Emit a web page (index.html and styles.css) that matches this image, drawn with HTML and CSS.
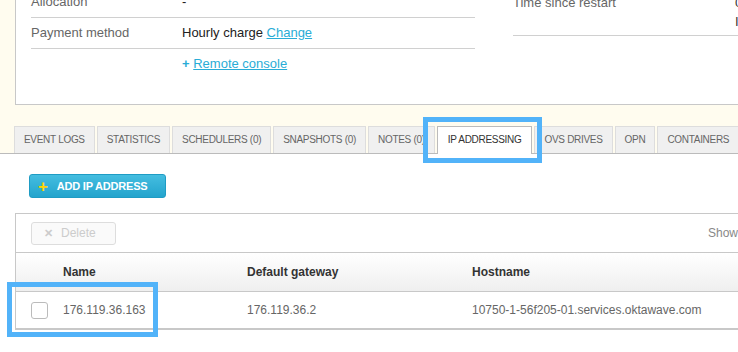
FILE: index.html
```html
<!DOCTYPE html>
<html lang="en">
<head>
    <meta charset="UTF-8">
    <title>IP addressing</title>
    <link rel="stylesheet" href="styles.css">
</head>
<body>
    <div class="page">
        <!-- Server details -->
        <section class="details">
            <div class="details-col left">
                <div class="row"><span class="label">Allocation</span><span class="value">-</span></div>
                <div class="row"><span class="label">Payment method</span><span class="value">Hourly charge <a href="#">Change</a></span></div>
                <div class="row plain"><span class="label"></span><span class="value"><span class="plus">+</span> <a href="#">Remote console</a></span></div>
            </div>
            <div class="details-col right">
                <div class="row tall"><span class="label">Time since restart</span><span class="value">0<br>I</span></div>
            </div>
        </section>

        <!-- Tabs -->
        <nav class="tabs">
            <a class="tab" href="#">EVENT LOGS</a>
            <a class="tab" href="#">STATISTICS</a>
            <a class="tab" href="#">SCHEDULERS (0)</a>
            <a class="tab" href="#">SNAPSHOTS (0)</a>
            <a class="tab" href="#">NOTES (0)</a>
            <a class="tab active" href="#">IP ADDRESSING</a>
            <a class="tab" href="#">OVS DRIVES</a>
            <a class="tab" href="#">OPN</a>
            <a class="tab" href="#">CONTAINERS</a>
        </nav>

        <div class="tab-body">
            <button class="btn-add"><span class="add-plus">+</span>ADD IP ADDRESS</button>

            <div class="grid">
                <div class="toolbar">
                    <button class="btn-delete" disabled><span class="x">✕</span>Delete</button>
                    <span class="show">Show</span>
                </div>
                <table>
                    <thead>
                        <tr>
                            <th class="col-check"></th>
                            <th class="col-name">Name</th>
                            <th class="col-gw">Default gateway</th>
                            <th>Hostname</th>
                        </tr>
                    </thead>
                    <tbody>
                        <tr>
                            <td class="col-check"><span class="checkbox"></span></td>
                            <td class="col-name">176.119.36.163</td>
                            <td class="col-gw">176.119.36.2</td>
                            <td>10750-1-56f205-01.services.oktawave.com</td>
                        </tr>
                    </tbody>
                </table>
            </div>
        </div>

        <!-- Annotation boxes -->
        <div class="highlight hl-tab"></div>
        <div class="highlight hl-row"></div>
    </div>
</body>
</html>
```

FILE: styles.css
```css
/* Общие стили */
body {
    margin: 0;
    padding: 0;
    font-family: "Liberation Sans", Arial, sans-serif;
    font-size: 12px;
    color: #222;
    background-color: #fffcef;
    overflow: hidden;
}

a {
    color: #29acd6;
}

.page {
    position: relative;
    height: 352px;
    overflow: hidden;
}

/* Детали сервера */
.details {
    display: flex;
    gap: 38px;
    margin: -14px 0 0 15px;
    padding: 0 0 25px 15px;
    background-color: #fff;
    border: 1px solid #c8c8c8;
    border-right: none;
    font-size: 13px;
}

.details-col.left {
    width: 444px;
    flex-shrink: 0;
}

.details-col.right {
    flex: 1;
}

.row {
    display: flex;
    height: 30px;
    line-height: 30px;
    border-bottom: 1px solid #d0d0d0;
    white-space: nowrap;
}

.row.plain {
    border-bottom: none;
}

.row.tall {
    height: 38px;
    padding: 6px 0 4px;
    line-height: 19px;
}

.label {
    width: 151px;
    flex-shrink: 0;
    color: #666;
}

.right .label {
    width: 222px;
}

.right .value {
    color: #333;
}

.plus {
    color: #29acd6;
    font-weight: bold;
}

/* Вкладки */
.tabs {
    display: flex;
    gap: 2px;
    margin-top: 21px;
    padding-left: 14px;
    border-bottom: 1px solid #bbb;
}

.tab {
    flex-shrink: 0;
    height: 26px;
    line-height: 26px;
    padding: 0 9px;
    background-color: #f0f0f0;
    border: 1px solid #ddd;
    border-bottom: none;
    color: #666;
    font-size: 10px;
    letter-spacing: -0.3px;
    text-decoration: none;
    white-space: nowrap;
}

.tab.active {
    margin-bottom: -1px;
    height: 27px;
    padding: 0 10px;
    background-color: #fff;
    border-color: #bbb;
    color: #333;
}

.tab-body {
    background-color: #fff;
    padding: 20px 0 60px 15px;
}

.btn-add {
    display: flex;
    align-items: center;
    height: 24px;
    margin-left: 14px;
    padding: 0 18px 0 8px;
    background: linear-gradient(#44bde0, #23a4cd);
    border: 1px solid #1f9cc4;
    border-radius: 3px;
    color: #fff;
    font-family: inherit;
    font-size: 11px;
    font-weight: bold;
    letter-spacing: -0.2px;
}

.add-plus {
    margin-right: 9px;
    color: #ffd500;
    font-size: 17px;
    line-height: 1;
}

/* Таблица */
.grid {
    margin-top: 15px;
    border: 1px solid #c8c8c8;
    border-right: none;
}

.toolbar {
    display: flex;
    align-items: center;
    justify-content: space-between;
    height: 38px;
    padding-left: 15px;
    border-bottom: 1px solid #c8c8c8;
}

.btn-delete {
    width: 85px;
    height: 23px;
    padding: 0 0 0 12px;
    text-align: left;
    background-color: #fafafa;
    border: 1px solid #ddd;
    border-radius: 3px;
    color: #ccc;
    font-family: inherit;
    font-size: 12px;
}

.btn-delete .x {
    margin-right: 8px;
    font-size: 11px;
    font-weight: bold;
}

.show {
    width: 30px;
    overflow: hidden;
    color: #888;
}

table {
    width: 100%;
    border-collapse: collapse;
}

th {
    height: 38px;
    text-align: left;
    font-weight: bold;
    color: #333;
    background: linear-gradient(#fff, #efefef);
    border-bottom: 1px solid #c8c8c8;
    padding: 0;
}

td {
    height: 36px;
    color: #666;
    border-bottom: 1px solid #c8c8c8;
    padding: 0;
}

.col-check {
    width: 47px;
}

.col-name {
    width: 184px;
}

.col-gw {
    width: 225px;
}

.checkbox {
    display: block;
    width: 15px;
    height: 15px;
    margin-left: 15px;
    border: 1px solid #bbb;
    border-radius: 3px;
    background-color: #fff;
}

/* Выделения */
.highlight {
    position: absolute;
    border: 5px solid #52b3f9;
    box-sizing: border-box;
}

.hl-tab {
    left: 423px;
    top: 117px;
    width: 119px;
    height: 46px;
}

.hl-row {
    left: 7px;
    top: 282px;
    width: 151px;
    height: 55px;
}
```
